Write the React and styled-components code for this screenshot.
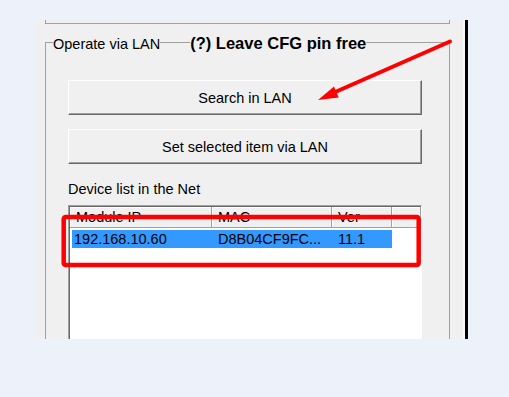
import React from 'react'
import styled, { createGlobalStyle } from 'styled-components'

const GlobalStyle = createGlobalStyle`
  * { box-sizing: border-box; }
  html, body {
    margin: 0;
    padding: 0;
    background: #edf1f9;
  }
  body {
    width: 509px;
    height: 397px;
    overflow: hidden;
    position: relative;
    font-family: "Liberation Sans", Arial, sans-serif;
    color: #000;
  }
`

const columns = [
  { title: 'Module IP', width: 142 },
  { title: 'MAC', width: 120 },
  { title: 'Ver', width: 60 },
  { title: '', width: 0 },
]

const devices = [
  { ip: '192.168.10.60', mac: 'D8B04CF9FC...', ver: '11.1', selected: true },
]

const App = () => {
  return (
    <>
      <GlobalStyle />
      <Window>
        <UpperGroup />
        <GroupBox>
          <Legend>
            <Caption>Operate via LAN</Caption>
            <Hint>(?) Leave CFG pin free</Hint>
          </Legend>
          <Buttons>
            <WinButton>Search in LAN</WinButton>
            <WinButton>Set selected item via LAN</WinButton>
          </Buttons>
          <Label>Device list in the Net</Label>
          <ListView>
            <ListHeader>
              {columns.map((c, i) => (
                <HeaderCell key={i}>{c.title}</HeaderCell>
              ))}
            </ListHeader>
            {devices.map((d) => (
              <Row key={d.ip} $selected={d.selected}>
                <Cell $first>{d.ip}</Cell>
                <Cell>{d.mac}</Cell>
                <Cell>{d.ver}</Cell>
              </Row>
            ))}
          </ListView>
        </GroupBox>
      </Window>
      <Annotations width="509" height="397" viewBox="0 0 509 397">
        <rect x="63.7" y="217" width="355" height="48" rx="2" fill="none" stroke="#ff0000" strokeWidth="4.5" />
        <line x1="450" y1="41.5" x2="333" y2="93" stroke="#ff0000" strokeWidth="4" strokeLinecap="round" />
        <polygon points="318,100 334,86.4 338.7,97.4" fill="#ff0000" />
      </Annotations>
    </>
  )
}

const Window = styled.div`
  margin: 20px 0 0 35px;
  width: 433px;
  height: 319px;
  background: #f0f0f0;
  border-right: 3px solid #000;
  box-shadow: inset -2px 0 0 #f9f9f9;
  overflow: hidden;
`
const UpperGroup = styled.div`
  margin: 0 15px 0 10px;
  height: 4px;
  border: 1px solid #a0a0a0;
  border-top: none;
`
const GroupBox = styled.div`
  margin: 18px 15px 0 10px;
  height: 400px;
  border: 1px solid #a0a0a0;
  padding: 0 27px 0 22px;
`
const Legend = styled.div`
  display: flex;
  align-items: baseline;
  gap: 30px;
  height: 17px;
  margin: -8px 0 0 -15px;
  line-height: 17px;
  span {
    background: #f0f0f0;
    white-space: nowrap;
  }
`
const Caption = styled.span`
  font-size: 14.5px;
`
const Hint = styled.span`
  font-size: 16.5px;
  font-weight: 700;
`
const Buttons = styled.div`
  display: flex;
  flex-direction: column;
  gap: 14px;
  margin-top: 28px;
`
const WinButton = styled.button`
  height: 35px;
  width: 100%;
  padding: 0;
  background: #f0f0f0;
  border: none;
  border-top: 1px solid #fff;
  border-left: 1px solid #fff;
  border-right: 1px solid #696969;
  border-bottom: 1px solid #696969;
  box-shadow: inset -1px -1px 0 #a0a0a0;
  font-family: "Liberation Sans", Arial, sans-serif;
  font-size: 14.5px;
  color: #000;
  cursor: pointer;
`
const Label = styled.div`
  margin-top: 17px;
  font-size: 14.5px;
  line-height: 17px;
`
const ListView = styled.div`
  margin-top: 7px;
  height: 200px;
  background: #fff;
  border-top: 1px solid #a0a0a0;
  border-left: 1px solid #a0a0a0;
  border-right: 1px solid #fff;
  box-shadow: inset 1px 1px 0 #696969;
  padding: 1px 0 0 1px;
`
const ListHeader = styled.div`
  display: grid;
  grid-template-columns: 142px 120px 60px 1fr;
  height: 21px;
`
const HeaderCell = styled.div`
  background: #f0f0f0;
  border-right: 1px solid #a0a0a0;
  border-bottom: 1px solid #a0a0a0;
  box-shadow: inset 1px 1px 0 #fff;
  padding-left: 6px;
  font-size: 14.5px;
  line-height: 20px;
  white-space: nowrap;
`
const Row = styled.div`
  display: grid;
  grid-template-columns: 140px 120px 60px;
  width: 320px;
  height: 18px;
  margin: 2px 0 0 2px;
  background: ${(p) => (p.$selected ? '#3399ff' : 'transparent')};
`
const Cell = styled.div`
  padding-left: ${(p) => (p.$first ? '2px' : '6px')};
  font-size: 14.5px;
  line-height: 18px;
  white-space: nowrap;
`
const Annotations = styled.svg`
  position: absolute;
  top: 0;
  left: 0;
  pointer-events: none;
`

export default App
